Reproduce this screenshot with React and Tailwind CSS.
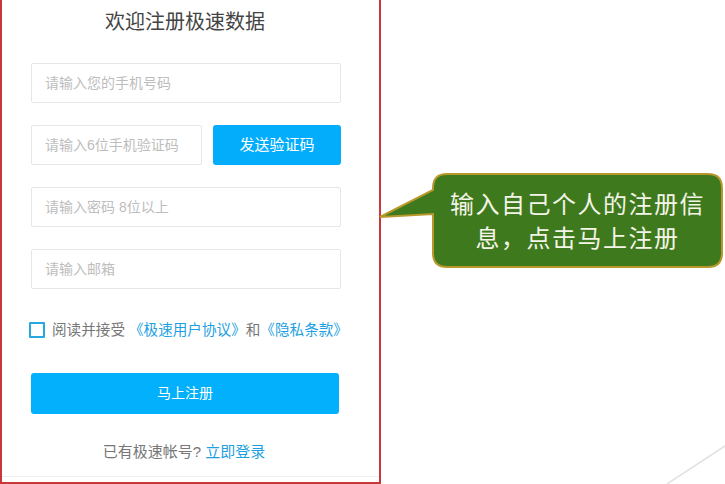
export default function App() {
  const font = { fontFamily: '"Liberation Sans", "Noto Sans CJK SC", sans-serif' };

  return (
    <div
      className="relative w-[725px] h-[484px] bg-white overflow-hidden"
      style={font}
    >
      {/* 注册表单截图 */}
      <div className="w-[381px] h-[484px] border-l-2 border-r-2 border-b-2 border-[#c8383a] bg-white flex flex-col">
        <div className="flex-1 flex flex-col pl-[29px] pr-[38px] border-b border-[#efefef]">
          <h1 className="text-center text-[20px] leading-[28px] text-[#444] mt-[8px] pr-[2px]">
            欢迎注册极速数据
          </h1>

          <input
            className="mt-[27px] h-[40px] w-[310px] border border-[#e6e6e6] rounded-[2px] px-[13px] text-[14px] outline-none placeholder:text-[#bdbdbd]"
            placeholder="请输入您的手机号码"
          />

          <div className="mt-[22px] flex gap-[11px]">
            <input
              className="h-[40px] w-[171px] border border-[#e6e6e6] rounded-[2px] px-[13px] text-[14px] outline-none placeholder:text-[#bdbdbd]"
              placeholder="请输入6位手机验证码"
            />
            <button className="h-[40px] w-[128px] rounded-[3px] bg-[#03adfc] text-white text-[15px]">
              发送验证码
            </button>
          </div>

          <input
            className="mt-[22px] h-[40px] w-[310px] border border-[#e6e6e6] rounded-[2px] px-[13px] text-[14px] outline-none placeholder:text-[#bdbdbd]"
            placeholder="请输入密码 8位以上"
          />

          <input
            className="mt-[22px] h-[40px] w-[310px] border border-[#e6e6e6] rounded-[2px] px-[13px] text-[14px] outline-none placeholder:text-[#bdbdbd]"
            placeholder="请输入邮箱"
          />

          <div className="mt-[31px] flex items-center -ml-[2px] w-[330px] whitespace-nowrap text-[14.6px] leading-[20px]">
            <span className="shrink-0 w-[16px] h-[16px] border-2 border-[#28a8e0] rounded-[1px] mr-[7px]" />
            <span className="text-[#777]">阅读并接受</span>
            <span className="text-[#1e9fe0] ml-[4px]">《极速用户协议》</span>
            <span className="text-[#777]">和</span>
            <span className="text-[#1e9fe0]">《隐私条款》</span>
          </div>

          <button className="mt-[33px] h-[41px] w-[308px] rounded-[3px] bg-[#03b0fc] text-white text-[14px]">
            马上注册
          </button>

          <div className="mt-[27px] text-center whitespace-nowrap text-[15px] pr-[4px]">
            <span className="text-[#777]">已有极速帐号? </span>
            <span className="text-[#1e9fe0]">立即登录</span>
          </div>
        </div>
        <div className="h-[5px]" />
      </div>

      {/* 标注气泡 */}
      <svg
        className="absolute left-0 top-0"
        width="725"
        height="484"
        viewBox="0 0 725 484"
      >
        <path
          d="M447 174 H708 Q722 174 722 188 V253 Q722 267 708 267 H447 Q433 267 433 253 V214 L380 217 L433 190 V188 Q433 174 447 174 Z"
          fill="#3e7a1d"
          stroke="#b9982b"
          strokeWidth="2"
        />
        <line x1="667" y1="484" x2="725" y2="446" stroke="#e2e2e2" strokeWidth="1.5" />
      </svg>
      <div className="absolute left-[433px] top-[188px] w-[289px] text-center text-[24px] leading-[34px] tracking-[1.5px] text-[#f4f4e8]">
        <div>输入自己个人的注册信</div>
        <div>息，点击马上注册</div>
      </div>
    </div>
  );
}
